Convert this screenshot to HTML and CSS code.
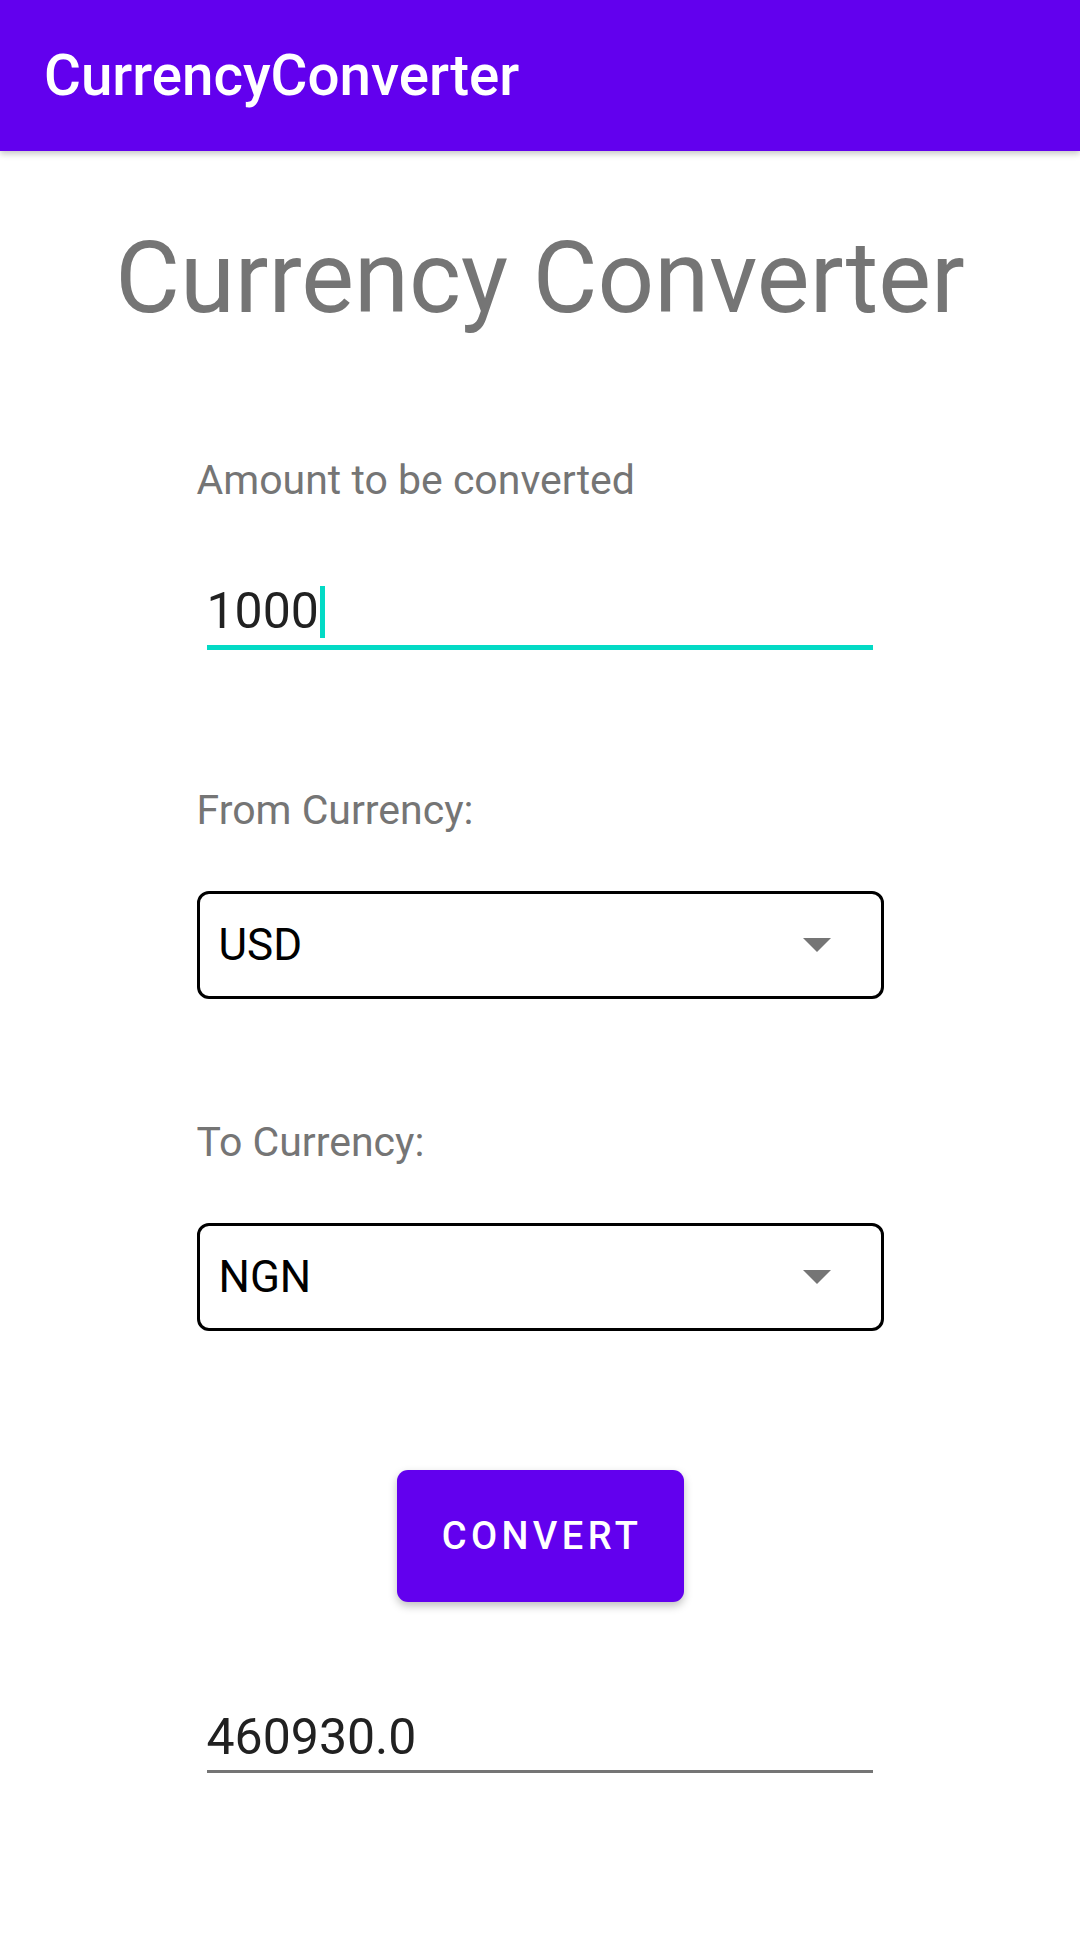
FILE: index.html
```html
<!DOCTYPE html>
<html>
<head>
<meta charset="utf-8">
<link rel="stylesheet" href="styles.css">
</head>
<body>
<header class="appbar"><span class="appbar-title">CurrencyConverter</span></header>
<main class="content">
  <h1 class="heading">Currency Converter</h1>
  <section class="form">
    <div class="label label-amount">Amount to be converted</div>
    <div class="field field-focused">
      <span class="field-text">1000</span><span class="cursor"></span>
    </div>
    <div class="label label-from">From Currency:</div>
    <div class="spinner">
      <span class="spinner-text">USD</span>
      <svg class="spinner-arrow" width="28" height="14" viewBox="0 0 28 14"><path d="M0 0 L28 0 L14 14 Z" fill="#757575"/></svg>
    </div>
    <div class="label label-to">To Currency:</div>
    <div class="spinner">
      <span class="spinner-text">NGN</span>
      <svg class="spinner-arrow" width="28" height="14" viewBox="0 0 28 14"><path d="M0 0 L28 0 L14 14 Z" fill="#757575"/></svg>
    </div>
    <div class="button-row"><button class="convert-btn">CONVERT</button></div>
    <div class="field field-result">
      <span class="field-text">460930.0</span>
    </div>
  </section>
</main>
</body>
</html>
```
FILE: styles.css
```css
* { box-sizing: border-box; }
html, body { margin: 0; padding: 0; background: #ffffff; }
body {
  width: 1080px;
  height: 1951px;
  font-family: Roboto, "Noto Sans", sans-serif;
  overflow: hidden;
}
.appbar {
  height: 151px;
  background: #6200ee;
  display: flex;
  align-items: center;
  padding-left: 44px;
  box-shadow: 0 3px 6px rgba(0, 0, 0, 0.22);
  position: relative;
  z-index: 1;
}
.appbar-title {
  color: #ffffff;
  font-weight: 500;
  font-size: 56.5px;
  line-height: 64px;
}
.content { display: flex; flex-direction: column; align-items: center; }
.heading {
  margin: 69px 0 0 0;
  font-weight: 400;
  font-size: 99.5px;
  line-height: 117px;
  color: #757575;
  text-align: center;
}
.form {
  width: 687px;
  display: flex;
  flex-direction: column;
}
.label {
  font-size: 41px;
  line-height: 48px;
  color: #757575;
}
.label-amount { margin-top: 119px; }
.label-from { margin-top: 136px; }
.label-to { margin-top: 119px; }
.field {
  margin: 79px 11px 0 10px;
  display: flex;
  align-items: flex-start;
  height: 67px;
  border-bottom: 5px solid #03dac5;
  font-size: 50px;
  line-height: 57px;
  color: #212121;
}
.cursor {
  display: inline-block;
  width: 5px;
  height: 52px;
  margin-top: 3px;
  background: #03dac5;
  margin-left: 1px;
}
.spinner {
  margin-top: 57px;
  height: 108px;
  border: 3px solid #000000;
  border-radius: 12px;
  display: flex;
  align-items: center;
  justify-content: space-between;
  padding: 0 50px 0 19px;
}
.spinner-text {
  font-size: 44px;
  line-height: 52px;
  color: #000000;
}
.spinner-arrow { display: block; }
.button-row {
  margin-top: 139px;
  display: flex;
  justify-content: center;
}
.convert-btn {
  width: 287px;
  height: 132px;
  background: #6200ee;
  color: #ffffff;
  border: none;
  border-radius: 11px;
  font-family: Roboto, sans-serif;
  font-weight: 500;
  font-size: 38px;
  letter-spacing: 4.4px;
  padding: 0 0 0 4px;
  box-shadow: 0 4px 8px rgba(0, 0, 0, 0.25);
}
.field-result {
  margin-top: 107px;
  border-bottom: 3px solid #757575;
  height: 64px;
}
```
